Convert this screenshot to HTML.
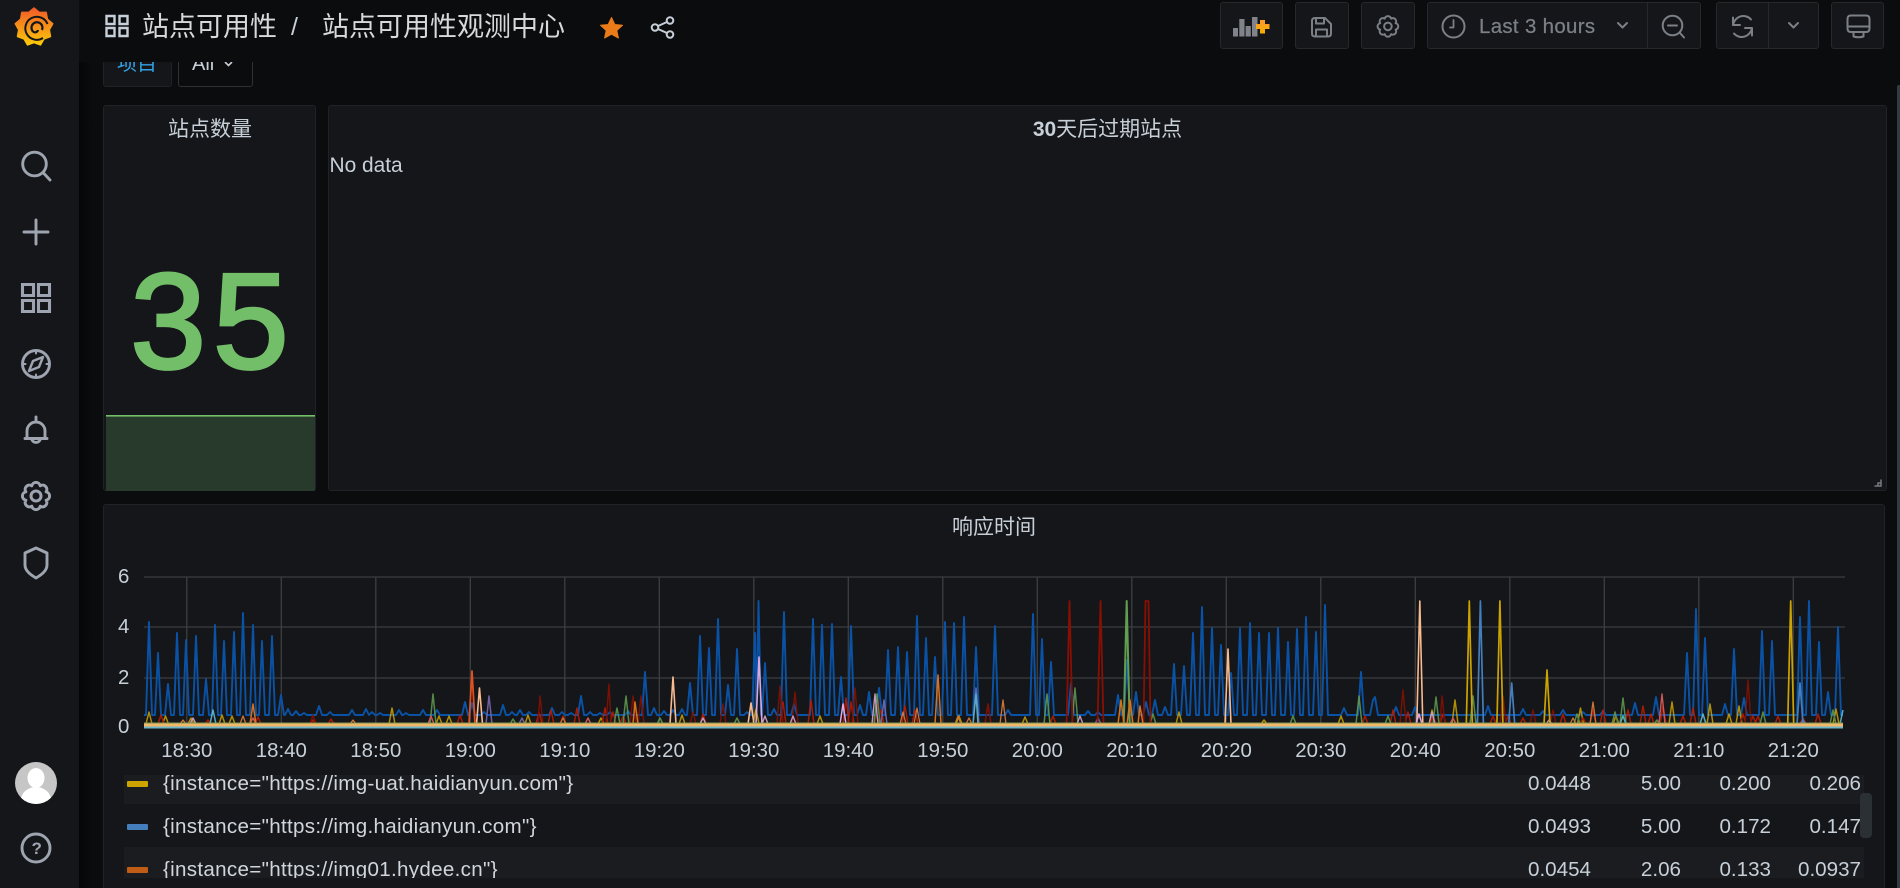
<!DOCTYPE html>
<html><head><meta charset="utf-8"><title>站点可用性观测中心</title>
<style>
*{box-sizing:border-box}
html,body{margin:0;padding:0;width:1900px;height:888px;overflow:hidden;background:#0b0c0e}
body{font-family:"Liberation Sans","Noto Sans CJK SC",sans-serif;color:#c7d0d9;position:relative}
.a{position:absolute}
#side{left:0;top:0;width:79px;height:888px;background:#141619}
#shade{left:79px;top:0;width:14px;height:888px;background:linear-gradient(90deg,#060607,#0b0c0e)}
#head{left:79px;top:0;width:1821px;height:62px;background:#0b0c0e;z-index:5}
.btn{position:absolute;top:2px;height:47px;background:#141619;border:1px solid #26282c;border-radius:3px;z-index:6}
.panel{position:absolute;background:#141619;border:1px solid #202226;border-radius:3px}
.t{position:absolute;white-space:nowrap;line-height:1}
.ttl{font-size:21px;color:#c7d0d9;transform:translateX(-50%)}
.xl{position:absolute;top:740px;font-size:20.4px;line-height:22px;transform:translateX(-50%);color:#c7d0d9}
.yl{position:absolute;font-size:20.4px;line-height:22px;left:118px;color:#c7d0d9}
.row{position:absolute;left:124px;width:1740px;height:43px}
.sw{position:absolute;left:3px;top:20px;width:21px;height:6px;border-radius:1px}
.lab{position:absolute;left:39px;top:11px;font-size:20.6px;letter-spacing:.3px;line-height:24px;white-space:nowrap;color:#d0d6dc}
.v{position:absolute;top:11px;font-size:20.6px;line-height:24px;text-align:right;width:90px;color:#c7d0d9}
svg{position:absolute;overflow:visible}
</style></head><body>

<svg width="0" height="0" style="position:absolute"><defs>
<linearGradient id="lg" x1="0" y1="0" x2="0" y2="1"><stop offset="0" stop-color="#f05a28"/><stop offset="1" stop-color="#fbca0a"/></linearGradient>
<linearGradient id="pg" x1="0" y1="0" x2="0" y2="1"><stop offset="0" stop-color="#ff9830"/><stop offset="1" stop-color="#f2b100"/></linearGradient>
<g id="gear" fill="none" stroke-linejoin="round"><path d="M19.21 4.84A4.3 4.3 0 0 1 25.16 10.79A4.3 4.3 0 0 1 25.16 19.21A4.3 4.3 0 0 1 19.21 25.16A4.3 4.3 0 0 1 10.79 25.16A4.3 4.3 0 0 1 4.84 19.21A4.3 4.3 0 0 1 4.84 10.79A4.3 4.3 0 0 1 10.79 4.84A4.3 4.3 0 0 1 19.21 4.84Z"/><circle cx="15" cy="15" r="5"/></g>
</defs></svg>

<div class="a" id="side"></div>
<div class="a" id="shade"></div>

<!-- logo -->
<svg style="left:0;top:0;z-index:7" width="79" height="60">
<polygon points="34,8 39.3,12.4 46.2,12.4 47.4,19.25 52.7,23.7 49.3,29.7 50.5,36.5 44,38.9 40.5,44.9 34,42.5 27.5,44.9 24,38.9 17.5,36.5 18.7,29.7 15.3,23.7 20.6,19.25 21.8,12.4 28.7,12.4" fill="url(#lg)" stroke="url(#lg)" stroke-width="1.5" stroke-linejoin="round"/>
<path d="M47.500 24A11.500 11.500 0 1 0 43 38" fill="none" stroke="#141619" stroke-width="2"/>
<path d="M42 30A5.500 5.500 0 1 0 33 31.500A3 3 0 0 0 38 30" fill="none" stroke="#141619" stroke-width="2.200"/>
</svg>

<!-- sidebar icons -->
<svg style="left:0;top:0" width="79" height="888" fill="none" stroke="#9ea5b0" stroke-width="2.900" stroke-linecap="round" stroke-linejoin="round">
<circle cx="34.5" cy="164" r="11.8"/><path d="M43.5 173L50 180"/>
<path d="M36 220V244M24 232H48"/>
<path d="M22.5 284.5h11v11h-11zM38.5 284.5h11v11h-11zM22.5 300.5h11v11h-11zM38.5 300.5h11v11h-11z" stroke-linejoin="miter" stroke-width="3.100"/>
<circle cx="36" cy="364" r="13.5"/><path d="M36 350.5v3M36 374.500v3M22.500 364h3M46.500 364h3" stroke-width="2"/><path d="M43 357L39 367 29 371 33 361Z" stroke-width="2.400"/>
<path d="M27 437V431A9 9 0 0 1 45 431V437M25 438.500H47M36 417v3M32 440A4.500 4.500 0 0 0 40 440"/>
<use href="#gear" x="21" y="481" stroke-width="3"/>
<path d="M25 553L36 548 47 553V565C47 571 41 575 36 578 31 575 25 571 25 565Z"/>
<circle cx="36" cy="848" r="14"/>
</svg>
<div class="t" style="left:31.500px;top:840px;font-size:17px;font-weight:bold;color:#9ea5b0">?</div>

<!-- avatar -->
<svg style="left:15px;top:762px" width="42" height="42"><defs><clipPath id="ac"><circle cx="21" cy="21" r="21"/></clipPath></defs><circle cx="21" cy="21" r="21" fill="#c6c6c6"/><g clip-path="url(#ac)" fill="#fff"><ellipse cx="21" cy="16" rx="8.500" ry="10"/><ellipse cx="21" cy="38" rx="15" ry="13"/></g></svg>

<!-- variables row -->
<div class="a" style="left:103px;top:40px;width:69px;height:47px;background:#141619;border:1px solid #202226;border-radius:3px"></div>
<div class="t" style="left:117px;top:54px;font-size:20px;color:#33a2e5">项目</div>
<div class="a" style="left:178px;top:40px;width:75px;height:47px;background:#0b0c0e;border:1px solid #2c3235;border-radius:3px"></div>
<div class="t" style="left:192px;top:54px;font-size:20px;color:#c7d0d9">All</div>
<svg style="left:224px;top:60px" width="10" height="8" fill="none" stroke="#c7d0d9" stroke-width="1.6"><path d="M1 2L4.500 5.500 8 2"/></svg>

<!-- header -->
<div class="a" id="head"></div>
<svg style="left:0;top:0;z-index:7" width="700" height="60" fill="none" stroke="#c7d0d9" stroke-width="2.400">
<path d="M106.500 16h8v8h-8zM119.500 16h8v8h-8zM106.500 28h8v8h-8zM119.500 28h8v8h-8z"/>
<path d="M611.500 17.500L614.800 24.500 622.500 25.300 616.800 30.500 618.400 38 611.500 34.200 604.600 38 606.200 30.500 600.500 25.300 608.200 24.500Z" fill="#eb7b18" stroke="#eb7b18" stroke-width="1" stroke-linejoin="round"/>
<g stroke-width="2"><circle cx="670" cy="20.500" r="3.300"/><circle cx="655" cy="27.500" r="3.300"/><circle cx="670" cy="34.500" r="3.300"/><path d="M658 26L667 22M658 29L667 33"/></g>
</svg>
<div class="t" style="left:142px;top:14px;font-size:27px;color:#d8d9da;z-index:7">站点可用性</div>
<div class="t" style="left:291px;top:15px;font-size:25px;color:#c7d0d9;z-index:7">/</div>
<div class="t" style="left:322px;top:14px;font-size:27px;color:#d8d9da;z-index:7">站点可用性观测中心</div>

<div class="btn" style="left:1220px;width:63px"></div>
<div class="btn" style="left:1295px;width:54px"></div>
<div class="btn" style="left:1361px;width:54px"></div>
<div class="btn" style="left:1427px;width:274px"></div>
<div class="btn" style="left:1716px;width:103px"></div>
<div class="btn" style="left:1831px;width:53px"></div>
<div class="a" style="left:1647px;top:2px;width:1px;height:47px;background:#26282c;z-index:7"></div>
<div class="a" style="left:1768px;top:2px;width:1px;height:47px;background:#26282c;z-index:7"></div>
<svg style="left:0;top:0;z-index:8" width="1900" height="60" fill="none" stroke="#7b8087" stroke-width="2" stroke-linecap="round" stroke-linejoin="round">
<path d="M1233 28h5v8.500h-5zM1239.300 19h5.200v17.500h-5.200zM1245.600 26h5.200v10.500h-5.200zM1252 17h5.500v19.500h-5.500z" fill="#80848a" stroke="none"/>
<path d="M1260 20h5v4h4.500v5h-4.500v4.500h-5v-4.500h-4v-5h4z" fill="url(#pg)" stroke="none"/>
<path d="M1315 18H1325L1331 24V33.500Q1331 36.500 1328 36.500H1315Q1312 36.500 1312 33.500V21Q1312 18 1315 18ZM1316 18V23.500H1324V18.500M1316 36V29.500H1327V36"/>
<use href="#gear" transform="translate(1376.500 15) scale(.76)" stroke-width="2.600"/>
<circle cx="1453.500" cy="26.500" r="11"/><path d="M1453.500 20V27.500H1450" stroke-width="1.800"/>
<path d="M1618 23L1622.500 27.500 1627 23"/>
<circle cx="1672.500" cy="25.500" r="9.800"/><path d="M1668 25.500H1677M1680 33L1684 37.500"/>
<path d="M1733 25A10.500 11 0 0 1 1751 19.500M1733 17.500V25H1740M1752 28A10.500 11 0 0 1 1734 33.500M1752 35.500V28H1745"/>
<path d="M1789 23L1793.500 27.500 1798 23"/>
<path d="M1851 15.500H1866Q1869.500 15.500 1869.500 19V28.500Q1869.500 32 1866 32H1851Q1847.500 32 1847.500 28.500V19Q1847.500 15.500 1851 15.500ZM1848 26.500H1869M1853.500 32V36.500Q1858.500 38 1863.500 36.500V32"/>
</svg>
<div class="t" style="left:1479px;top:16px;font-size:20.400px;letter-spacing:.35px;line-height:22px;color:#7b8087;-webkit-text-stroke:.25px #7b8087;z-index:8">Last 3 hours</div>

<!-- page scrollbar -->
<div class="a" style="left:1897px;top:85px;width:3px;height:803px;background:#343b40;border-radius:2px 0 0 0"></div>

<!-- stat panel -->
<div class="panel" style="left:103px;top:105px;width:213px;height:386px"></div>
<div class="t ttl" style="left:210px;top:119px">站点数量</div>
<svg style="left:0;top:0" width="400" height="500">
<rect x="106" y="416" width="209" height="75" fill="#283a2b"/>
<rect x="106" y="415" width="209" height="1.600" fill="#73bf69"/>
<text x="213" y="368" text-anchor="middle" letter-spacing="7" font-family="Liberation Sans,sans-serif" font-size="136" fill="#73bf69" stroke="#73bf69" stroke-width="3.200">35</text>
</svg>

<!-- no data panel -->
<div class="panel" style="left:328px;top:105px;width:1559px;height:386px"></div>
<div class="t ttl" style="left:1107.500px;top:119px"><b>30</b>天后过期站点</div>
<div class="t" style="left:329.500px;top:155px;font-size:20.900px;line-height:21px;color:#c7d0d9">No data</div>
<svg style="left:1873px;top:478px" width="10" height="10" fill="none" stroke="#767a80" stroke-width="1.500"><path d="M8 1.500V8H1.500M5 8V5H8" /></svg>

<!-- graph panel -->
<div class="panel" style="left:103px;top:504px;width:1782px;height:390px"></div>
<div class="t ttl" style="left:994px;top:517px">响应时间</div>

<div class="yl" style="top:566px">6</div>
<div class="yl" style="top:616px">4</div>
<div class="yl" style="top:667px">2</div>
<div class="yl" style="top:716px">0</div>

<svg style="left:0;top:0" width="1900" height="760" fill="none" stroke-linejoin="round">
<g stroke="#3c3e41" stroke-width="1.300">
<path d="M144 577H1845M144 627H1845M144 678H1845"/>
<path d="M186.800 577V724M281.300 577V724M375.800 577V724M470.300 577V724M564.800 577V724M659.300 577V724M753.800 577V724M848.300 577V724M942.800 577V724M1037.300 577V724M1131.800 577V724M1226.300 577V724M1320.800 577V724M1415.300 577V724M1509.800 577V724M1604.300 577V724M1698.800 577V724M1793.300 577V724"/>
</g>

<!-- blue main -->
<path stroke="#0a52a6" stroke-width="1.900" d="M144 715H146l3-93 3 93H155l3-62 3 62H165l3-31 3 31H174l3-82 3 82H183l3-75 3 75H193l3-79 3 79H203l3-36 3 36H212l3-90 3 90H221l3-74 3 74H231l3-83 3 83H240l3-102 3 102H250l3-90 3 90H259l3-74 3 74H269l3-79 3 79H278l3-20 3 20H285l3-6 3 6H293l3-4 3 4H301l3-2 3 2H316l3-9 3 9H327l3-3 3 3H349l3-5 3 5H363l3-6 3 6 3-3 3 3H377l3-2 3 2H396l3-5 3 5H403l3-2 3 2H420l3-5 3 5H434l3-5 3 5H462l3-13 3 13H469l3-12 3 12H481l3-3 3 3H500l3-10 3 10H509l3-3 3 3H517l3-5 3 5H526l3-3 3 3H549l3-7 3 7H559l3-3 3 3H568l3-2 3 2H578l3-19 3 19H587l3-3 3 3H597l3-2 3 2H607l3-3 3 3H625l3-4 3 4H642l3-43 3 43H651l3-7 3 7H661l3-4 3 4H670l3-5 3 5H679l3-6 3 6H687l3-32 3 32H697l3-79 3 79H706l3-67 3 67H715l3-96 3 96H725l3-30 3 30H734l3-66 3 66H744l3-3 3 3H752l3-82 1.500 82 2-114 2.500 114H762l3-52 3 52H771l3-6 3 6H781l3-103 3 103H791l3-11 3 11H810l3-96 3 96H819l3-90 3 90H829l3-91 3 91H838l3-38 3 38H848l3-89 3 89H857l3-10 3 10H866l3-23 3 23H876l3-27 3 27H885l3-65 3 65H895l3-68 3 68H904l3-63 3 63H914l3-99 3 99H923l3-77 3 77H932l3-58 3 58H942l3-93 3 93H951l3-92 3 92H961l3-98 3 98H973l3-68 3 68H992l3-89 3 89H1005l3-5 3 5H1030l3-101 3 101H1039l3-76 3 76H1048l3-53 3 53H1068l3-32 3 32H1085l3-4 3 4H1095l3-3 3 3H1115l3-20 3 20H1124l3-55 3 55H1133l3-23 3 23H1143l3-13 3 13H1152l3-15 3 15H1162l3-8 3 8H1171l3-51 3 51H1181l3-49 3 49H1190l3-82 3 82H1199l3-108 3 108H1209l3-87 3 87H1218l3-70 3 70H1228l3-42 3 42H1237l3-87 3 87H1247l3-92 3 92H1256l3-82 3 82H1266l3-82 3 82H1275l3-87 3 87H1285l3-73 3 73H1294l3-86 3 86H1303l3-98 3 98H1313l3-83 3 83H1322l3-110 3 110H1341l3-7 3 7H1358l3-43 3 43H1370l3-15 2-3 3 18H1393l3-8 3 8H1412l3-8 3 8H1485l3-9 3 9H1520l3-6 3 6H1540l3-4 3 4H1560l3-5 3 5H1580l3-3 3 3H1600l3-4 3 4H1632l3-12 3 12H1653l3-18 3 18H1684l3-62 3 62H1693l3-106 3 106H1702l3-77 3 77H1722l3-11 3 11H1731l3-66 3 66H1741l3-17 3 17H1759l3-84 3 84H1769l3-74 3 74H1797l3-98 3 98H1806l3-114 3 114H1816l3-73 3 73H1825l3-23 3 23H1835l3-88 3 88H1843"/>

<!-- small spikes -->
<g opacity=".85">
<path stroke="#cca300" stroke-width="1.500" d="M146 724l3-12 3 12M162.500 724l3-8 3 8M188 724l3-6 3 6M219 724l3-9 3 9M229 724l3-8 3 8M389 724l3-16 3 16M436 724l3-8 3 8M446 724l3-8 3 8M525 724l3-9 3 9M598 724l3-6 3 6M679 724l3-9 3 9M753 724l3-15 3 15M817 724l3-8 3 8M956 724l3-8 3 8M1176 724l3-12 3 12M1261 724l3-4 3 4M1022 724l3-7 3 7M1338 724l3-8 3 8M1429 724l3-14 3 14M1452 724l3-24 3 24M1577.500 724l3-16 3 16M1613 724l3-8 3 8M1669 724l3-22 3 22M1707 724l3-20 3 20M1726 724l3-10 3 10M1736 724l3-18 3 18M1833 724l3-15 3 15"/>
<path stroke="#bf1b00" stroke-width="1.500" d="M158 724l3-9 3 9M205 724l3-4 3 4M255 724l3-7 3 7M310 724l3-4 3 4M328 724l3-5 3 5M457 724l3-9 3 9M536 724l3-12 3 12M548 724l3-14 3 14M560 724l3-8 3 8M574 724l3-16 3 16M602 724l3-16 3 16M610 724l3-12 3 12M620 724l3-8 3 8M700 724l3-10 3 10M780 724l3-22 3 22M808 724l3-24 3 24M843 724l3-26 3 26M848 724l3-22 3 22M878 724l3-14 3 14M902 724l3-18 3 18M912 724l3-14 3 14M985 724l3-20 3 20M1050 724l3-8 3 8M1390 724l3-14 3 14M1362 724l3-8 3 8M1405 724l3-12 3 12M1430 724l3-8 3 8M1440 724l3-10 3 10M1490 724l3-8 3 8M1505 724l3-8 3 8M1520 724l3-6 3 6M1560 724l3-10 3 10M1580 724l3-6 3 6M1590 724l3-14 3 14M1600 724l3-14 3 14M1612 724l3-12 3 12M1625 724l3-14 3 14M1640 724l3-18 3 18M1648 724l3-10 3 10M1660 724l3-18 3 18M1680 724l3-8 3 8M1690 724l3-16 3 16M1740 724l3-10 3 10M1750 724l3-8 3 8M1755 724l3-8 3 8M1775 724l3-8 3 8M1800 724l3-6 3 6M1815 724l3-10 3 10"/>
<path stroke="#890f02" stroke-width="1.500" d="M310 724l3-9 3 9M538 724l2-28 3 28M1530 724l3-14 3 14M1500 724l3-28 3 28M1400 724l3-34 3 34M1745 724l3-44 3 44M1440 724l2-28 3 28M1550 724l3-14 3 14M638 724l3-28 3 28M606 724l3-40 2 40M630 724l3-28 3 28M690 724l3-12 3 12M720 724l3-20 3 20M777 724l3-38 3 38M792 724l3-32 3 32M852 724l3-36 3 36M875 724l3-26 3 26M985 724l3-20 3 20"/>
<path stroke="#629e51" stroke-width="1.500" d="M430 724l3-30 3 30M510 724l3-5 3 5M614 724l3-16 3 16M623 724l3-28 3 28M657 724l3-6 3 6M734 724l3-6 3 6M874 724l3-30 3 30M1044 724l3-30 3 30M1072 724l3-36 3 36M1150 724l3-10 3 10M1433 724l3-27 3 27M1470 724l3-28 3 28M1574 724l3-10 3 10M1654 724l3-4 3 4M1612 724l3-12 3 12M1620 724l3-26 3 26M1760 724l3-12 3 12M1830 724l3-14 3 14M1290 724l3-8 3 8M1356 724l3-28 3 28M1385 724l3-8 3 8"/>
<path stroke="#806eb7" stroke-width="1.500" d="M486 724l3-28 3 28M519 724l3-6 3 6M881 724l3-24 3 24M973 724l3-36 3 36M1095 724l3-6 3 6M1800 724l3-4 3 4"/>
<path stroke="#ea6460" stroke-width="1.400" d="M428 724l3-8 3 8M1659 724l3-30 3 30M1450 724l3-6 3 6M585 724l3-6 3 6M250 724l3-6 3 6"/>
<path stroke="#e5b0d8" stroke-width="1.400" d="M190 724l3-6 3 6M790 724l3-8 3 8M762 724l3-8 3 8M700 724l3-6 3 6M1077 724l3-8 3 8M1429 724l3-12 3 12M1546 724l3-4 3 4M872 724l3-30 3 30"/>
<path stroke="#65c5db" stroke-width="1.500" d="M973 724l3-30 2 30M210 724l3-14 3 14M1620 724l3-8 3 8M1700 724l3-10 3 10M1840 724l3-14"/>
<path stroke="#ef843c" stroke-width="1.300" d="M180 724l3-4 3 4M240 724l3-8 3 8M350 724l3-4 3 4M560 724l3-6 3 6M900 724l3-12 3 12M914 724l3-16 3 16M955 724l3-8 3 8M966 724l3-6 3 6M1000 724l3-24 3 24M1570 724l3-6 3 6M1590 724l3-22 3 22"/>
</g>

<!-- tall colored spikes -->
<path stroke="#890f02" stroke-width="1.800" d="M1066.500 724l3-123 3 123M1097.500 724l3-123 3 123M1143.500 724l2-123 3 0 2 123"/>
<path stroke="#629e51" stroke-width="2" d="M1123.700 724l3-123 3 123"/>
<path stroke="#f9ba8f" stroke-width="1.600" d="M1416.800 724l3-123 3 123M1225 724l3-75 3 75M670 724l3-47 3 47M476.500 724l3-36 3 36M748 724l3-21 3 21"/>
<path stroke="#cca300" stroke-width="1.700" d="M1466.300 724l3-123 3 123M1496.900 724l3-123 3 123M1544 724l3-54 3 54M1787.700 724l3-123 3 123"/>
<path stroke="#447ebc" stroke-width="1.700" d="M1477.400 724l3-123 3 123M1508.700 724l3-41 3 41M1797 724l3-41 3 41"/>
<path stroke="#e0511f" stroke-width="1.800" d="M469 724l3-53 3 53"/>
<path stroke="#d8a8e0" stroke-width="1.600" d="M756 724l3-67 3 67"/>
<path stroke="#e5a8e2" stroke-width="1.500" d="M1416 724l3-10 3 10M840 724l3-20 3 20"/>
<path stroke="#d9701a" stroke-width="1.500" d="M935 724l3-49 3 49M250 724l3-20 3 20M633 724l2-22 3 22M1118 724l3-24 3 24M1127 724l3-24 3 24M1138 724l2-18 3 18"/>

<!-- bottom band -->
<rect x="144" y="722.500" width="1699" height="1.200" fill="#7d9a55"/>
<rect x="144" y="723.500" width="1699" height="3" fill="#f0b868"/>
<rect x="144" y="726.500" width="1699" height="2" fill="#6fb6c8"/>
</svg>

<div class="xl" style="left:186.800px">18:30</div>
<div class="xl" style="left:281.300px">18:40</div>
<div class="xl" style="left:375.800px">18:50</div>
<div class="xl" style="left:470.300px">19:00</div>
<div class="xl" style="left:564.800px">19:10</div>
<div class="xl" style="left:659.300px">19:20</div>
<div class="xl" style="left:753.800px">19:30</div>
<div class="xl" style="left:848.300px">19:40</div>
<div class="xl" style="left:942.800px">19:50</div>
<div class="xl" style="left:1037.300px">20:00</div>
<div class="xl" style="left:1131.800px">20:10</div>
<div class="xl" style="left:1226.300px">20:20</div>
<div class="xl" style="left:1320.800px">20:30</div>
<div class="xl" style="left:1415.300px">20:40</div>
<div class="xl" style="left:1509.800px">20:50</div>
<div class="xl" style="left:1604.300px">21:00</div>
<div class="xl" style="left:1698.800px">21:10</div>
<div class="xl" style="left:1793.300px">21:20</div>

<!-- legend -->
<div class="a" style="left:124px;top:775px;width:1740px;height:103px;overflow:hidden">
  <div class="row" style="left:0;top:-14px;background:#1a1c1f">
    <div class="sw" style="background:#cca300"></div>
    <div class="lab">{instance="https://img-uat.haidianyun.com"}</div>
    <div class="v" style="left:1377px">0.0448</div><div class="v" style="left:1467px">5.00</div><div class="v" style="left:1557px">0.200</div><div class="v" style="left:1647px">0.206</div>
  </div>
  <div class="row" style="left:0;top:29px">
    <div class="sw" style="background:#447ebc"></div>
    <div class="lab">{instance="https://img.haidianyun.com"}</div>
    <div class="v" style="left:1377px">0.0493</div><div class="v" style="left:1467px">5.00</div><div class="v" style="left:1557px">0.172</div><div class="v" style="left:1647px">0.147</div>
  </div>
  <div class="row" style="left:0;top:72px;background:#1a1c1f">
    <div class="sw" style="background:#c15c17"></div>
    <div class="lab">{instance="https://img01.hydee.cn"}</div>
    <div class="v" style="left:1377px">0.0454</div><div class="v" style="left:1467px">2.06</div><div class="v" style="left:1557px">0.133</div><div class="v" style="left:1647px">0.0937</div>
  </div>
</div>
<div class="a" style="left:1860px;top:793px;width:12px;height:45px;background:#2a3034;border-radius:4px"></div>

</body></html>
